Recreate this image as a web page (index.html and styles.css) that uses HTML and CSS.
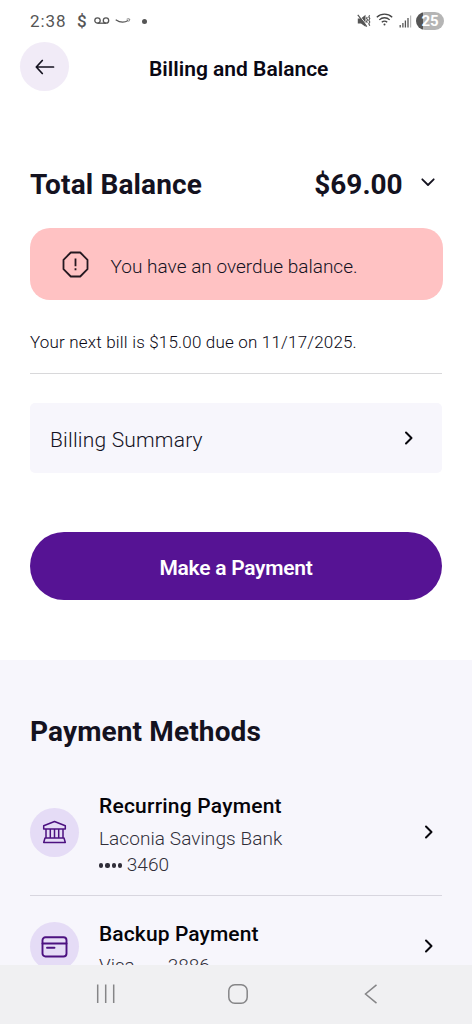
FILE: index.html
```html
<!DOCTYPE html>
<html lang="en">
<head>
<meta charset="utf-8">
<title>Billing and Balance</title>
<link rel="stylesheet" href="styles.css">
</head>
<body>
<div class="screen">
  <div class="status">
    <span class="clock">2:38</span>
    <span class="dollar">$</span>
    <svg class="voicemail" width="16" height="10" viewBox="0 0 16 10"><circle cx="3.5" cy="4.5" r="2.7"/><circle cx="12" cy="4.5" r="2.7"/><path d="M3.5 7.2H12"/></svg>
    <svg class="smile" width="16" height="8" viewBox="0 0 16 8"><path d="M.7 2.8C5 5.7 9.5 5.8 13.2 3.5"/><path d="M11.7 2.2c1.7-.5 3-.5 3 0s-.4 1.6-1 2.4" stroke-width=".8"/></svg>
    <span class="dot"></span>
    <div class="system">
      <svg width="14" height="14" viewBox="0 0 14 14"><path d="M.8 4.500h3.200l4.500-3.700v12L4 9.500H.8z" fill="#555"/><path d="M1.500.4l9 11.400" stroke="#fff" stroke-width="1"/><path d="M.8.9l9 11.700" stroke="#555" stroke-width="1.200"/><path d="M10.300 3l-.8 1.300 1 1.500-1 1.600.8 1.300M12.600 1.200l-.8 1.700 1 1.700-1 1.700 1 1.700-1 1.700 1 2" fill="none" stroke="#555" stroke-width="1.100"/></svg>
      <svg class="wifi" width="17" height="13" viewBox="0 0 17 13"><path d="M.8 4.200C5.200 0 11.800 0 16.200 4.200M3.300 6.900c3-2.900 7.400-2.900 10.400 0M5.800 9.300c1.500-1.500 3.900-1.500 5.400 0" fill="none" stroke="#444" stroke-width="1.300"/><circle cx="8.500" cy="11.500" r="1" fill="#444"/></svg>
      <svg class="signal" width="13" height="13" viewBox="0 0 13 13"><path d="M1.200 10v2.500M3.900 8v4.500M6.400 5.500v7M9 3v9.500" stroke="#555" stroke-width="1.300"/><path d="M11.600.5v12" stroke="#bbb" stroke-width="1.200"/></svg>
      <span class="battery">25</span>
    </div>
  </div>

  <header class="header">
    <span class="back"><svg width="20" height="16" viewBox="0 0 20 16"><path d="M18.500 8H1.500M7.300 1.500L1.300 8l6 6.500"/></svg></span>
    <h1 class="title">Billing and Balance</h1>
  </header>

  <main class="balance">
    <div class="total">
      <h2 class="total-label">Total Balance</h2>
      <span class="amount">$69.00</span>
      <svg class="chevron-down" width="14" height="10" viewBox="0 0 14 10"><path d="M1.300 2.300L7 8l5.700-5.700"/></svg>
    </div>
    <div class="alert">
      <svg class="octagon" width="27" height="27" viewBox="0 0 27 27"><path d="M8.800 1.500h9.400l7.300 7.300v9.400l-7.300 7.300H8.800l-7.300-7.300V8.800z"/><path d="M13.500 7.500v7.700M13.500 17.300v2"/></svg>
      <span class="alert-text">You have an overdue balance.</span>
    </div>
    <p class="next-bill">Your next bill is $15.00 due on 11/17/2025.</p>
    <div class="summary">
      <span class="summary-text">Billing Summary</span>
      <svg class="chevron" width="10" height="14" viewBox="0 0 10 14"><path d="M2 1.500L7.500 7 2 12.500"/></svg>
    </div>
    <div class="button"><span class="button-text">Make a Payment</span></div>
  </main>

  <section class="methods">
    <h2 class="methods-title">Payment Methods</h2>
    <div class="method">
      <span class="badge"><svg width="25" height="24" viewBox="0 0 25 24"><path d="M1.700 9V5.700L12.500 1.500l10.800 4.200V9zM4 9v9M8.300 9v9M12.500 9v9M16.700 9v9M21 9v9M3 18h19l1.300 4.500H1.700z"/></svg></span>
      <div class="info">
        <h3 class="name recurring">Recurring Payment</h3>
        <p class="detail bank">Laconia Savings Bank</p>
        <p class="detail"><span class="mask"><i></i><i></i><i></i><i></i></span>3460</p>
      </div>
      <svg class="chevron" width="10" height="14" viewBox="0 0 10 14"><path d="M2 1.500L7.500 7 2 12.500"/></svg>
    </div>
    <div class="method backup-row">
      <span class="badge"><svg width="27" height="22" viewBox="0 0 27 22"><rect x="1.500" y="1.300" width="24" height="19.200" rx="3"/><path d="M1.500 7.500h24"/><path d="M6 11.800h7.500"/></svg></span>
      <div class="info">
        <h3 class="name backup">Backup Payment</h3>
        <p class="detail">Visa <span class="mask mask-visa"><i></i><i></i><i></i><i></i></span>3886</p>
      </div>
      <svg class="chevron" width="10" height="14" viewBox="0 0 10 14"><path d="M2 1.500L7.500 7 2 12.500"/></svg>
    </div>
  </section>

  <nav class="nav">
    <svg width="20" height="20" viewBox="0 0 20 20"><path d="M1.700.5v18.500M9.700.5v18.500M17.700.5v18.500"/></svg>
    <svg width="20" height="20" viewBox="0 0 20 20"><rect x=".8" y=".8" width="18.400" height="18.400" rx="6"/></svg>
    <svg width="14" height="20" viewBox="0 0 14 20"><path d="M12.500.8L1.500 10l11 9.200"/></svg>
  </nav>
</div>
</body>
</html>
```
FILE: styles.css
```css
* { box-sizing: border-box; }
body { margin: 0; background: #fff; color: #14121f; font-family: Roboto, "Liberation Sans", sans-serif; }
h1, h2, h3, p { margin: 0; white-space: nowrap; }
svg { display: block; flex: none; fill: none; }
.screen { display: flex; flex-direction: column; width: 472px; height: 1024px; overflow: hidden; }

.status { display: flex; align-items: center; height: 42px; padding: 0 28px 0 30px; color: #555; }
.clock { width: 47px; font-size: 17px; letter-spacing: .9px; }
.dollar { width: 17px; font-size: 17px; font-weight: 500; }
.voicemail { stroke: #555; stroke-width: 1.3; }
.smile { margin-left: 5px; stroke: #555; stroke-width: 1.2; }
.dot { width: 5px; height: 5px; margin-left: 11px; border-radius: 50%; background: #555; }
.system { display: flex; align-items: center; margin-left: auto; }
.wifi { margin-left: 5px; margin-top: -3px; }
.signal { margin: 0 4px 0 6px; }
.battery { width: 28px; height: 18px; border-radius: 9px; background: linear-gradient(90deg, #555 25%, #b5b5b5 25%); color: #fff; font: bold 15px/18px Roboto, sans-serif; text-align: center; }

.header { display: flex; align-items: center; height: 49px; padding-left: 20px; }
.back { display: grid; place-items: center; width: 49px; height: 49px; border-radius: 50%; background: #f1ebf7; }
.back svg { stroke: #14121f; stroke-width: 1.7; stroke-linecap: round; stroke-linejoin: round; }
.title { margin-left: 80px; padding-top: 4px; font-size: 21px; font-weight: 600; line-height: 26px; color: #0a0814; }

.balance { height: 569px; padding: 77px 30px 0 30px; }
.total { display: flex; align-items: center; height: 34px; }
.total-label, .amount, .methods-title { font-size: 28px; font-weight: 700; line-height: 34px; letter-spacing: .13px; }
.amount { margin-left: auto; letter-spacing: -.05px; }
.chevron-down { margin: -6px 7px 0 18.5px; stroke: #14121f; stroke-width: 1.8; stroke-linecap: round; stroke-linejoin: round; }
.alert { display: flex; align-items: center; height: 72px; margin-top: 26px; margin-right: -.5px; padding-left: 32px; border-radius: 20px; background: #ffc2c3; }
.octagon { stroke: #241820; stroke-width: 1.8; stroke-linejoin: round; }
.alert-text { margin-left: 21.5px; padding-top: 5px; font-size: 19px; font-weight: 300; line-height: 26px; letter-spacing: .02px; }
.next-bill { margin-top: 32px; padding-bottom: 21px; border-bottom: 1px solid #d8d8da; font-size: 17px; font-weight: 350; line-height: 20px; letter-spacing: .18px; color: #0a0814; }
.summary { display: flex; align-items: center; justify-content: space-between; height: 70px; margin-top: 29px; padding: 0 28.5px 0 20px; border-radius: 5px; background: #f7f6fc; }
.summary-text { padding-top: 4px; font-size: 21px; font-weight: 300; line-height: 26px; letter-spacing: .2px; }
.chevron { stroke: #08070d; stroke-width: 2; stroke-linecap: round; stroke-linejoin: round; }
.button { display: grid; place-items: center; height: 68px; margin-top: 59px; border-radius: 34px; background: #561394; color: #fff; }
.button-text { padding-top: 3px; font-size: 21px; font-weight: 600; line-height: 26px; letter-spacing: -.27px; }

.methods { height: 305px; padding: 55px 30px 0 30px; overflow: hidden; background: #f7f6fc; }
.method { display: flex; align-items: center; height: 120px; margin-top: 26px; padding-right: 8.5px; }
.badge { display: grid; place-items: center; width: 49px; height: 49px; margin-bottom: 6px; border-radius: 50%; background: #e5dcf6; }
.method > .chevron { margin-bottom: 6px; }
.badge svg { stroke: #4c1180; stroke-width: 1.5; stroke-linejoin: round; stroke-linecap: round; }
.info { margin: 0 auto 0 20px; }
.name { margin-bottom: 7px; font-size: 21px; font-weight: 500; line-height: 26px; color: #050409; }
.recurring { letter-spacing: .22px; }
.backup { margin-bottom: 6px; letter-spacing: .1px; }
.detail { display: flex; align-items: center; font-size: 19px; font-weight: 300; line-height: 26px; color: #302e39; }
.bank { letter-spacing: .08px; }
.mask { display: inline-flex; gap: 2.2px; margin-right: 4.5px; padding-top: 2px; }
.mask i { width: 4.2px; height: 4.2px; border-radius: 50%; background: #302e39; }
.mask-visa { margin: 3px 4px 0 5.5px; }
.backup-row { align-items: flex-start; height: 102px; margin-top: 0; padding-top: 25px; border-top: 1px solid #d8d6df; }
.backup-row .badge { margin-top: 1px; }
.backup-row .badge svg { stroke-width: 1.9; }
.backup-row > .chevron { margin-top: 18px; }

.nav { display: flex; justify-content: center; align-items: center; height: 59px; padding: 0 0 1px 1px; background: #f0f0f2; }
.nav svg { stroke: #858587; stroke-width: 1.5; }
.nav svg:nth-child(2) { margin: 0 116px 0 112px; }
```
